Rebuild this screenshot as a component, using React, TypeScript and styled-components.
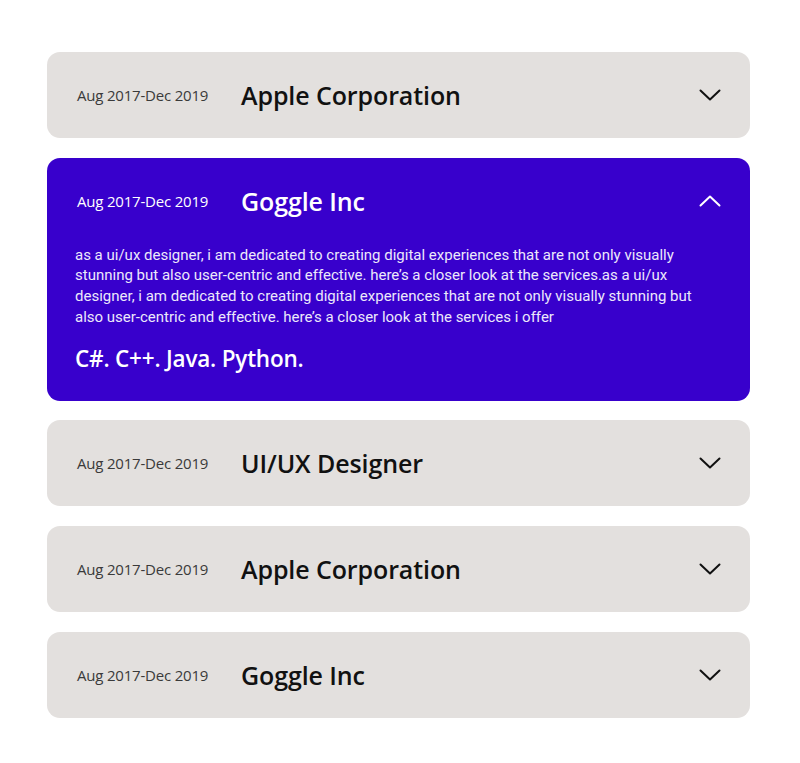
import React, { useState } from 'react';
import styled, { createGlobalStyle } from 'styled-components';

const GlobalStyle = createGlobalStyle`
  body {
    margin: 0;
    background: #ffffff;
    font-family: "Open Sans", "Noto Sans", sans-serif;
  }
`;

const colors = {
  card: '#e3e0de',
  active: '#3800cc',
  text: '#111111',
  date: '#3a3a3a',
};

interface Job {
  period: string;
  company: string;
  description?: string;
  skills?: string;
}

const description =
  'as a ui/ux designer, i am dedicated to creating digital experiences that are not only visually stunning but also user-centric and effective. here\u2019s a closer look at the services.as a ui/ux designer, i am dedicated to creating digital experiences that are not only visually stunning but also user-centric and effective. here\u2019s a closer look at the services i offer';

const jobs: Job[] = [
  { period: 'Aug 2017-Dec 2019', company: 'Apple Corporation' },
  { period: 'Aug 2017-Dec 2019', company: 'Goggle Inc', description, skills: 'C#. C++. Java. Python.' },
  { period: 'Aug 2017-Dec 2019', company: 'UI/UX Designer' },
  { period: 'Aug 2017-Dec 2019', company: 'Apple Corporation' },
  { period: 'Aug 2017-Dec 2019', company: 'Goggle Inc' },
];

const List = styled.div`
  width: 703px;
  margin: 52px 0 0 47px;
  display: flex;
  flex-direction: column;
  gap: 19.7px;
`;

const Card = styled.div<{ $open: boolean }>`
  border-radius: 13px;
  background: ${(p) => (p.$open ? colors.active : colors.card)};
  color: ${(p) => (p.$open ? '#ffffff' : colors.text)};
`;

const Header = styled.div`
  height: 86px;
  display: flex;
  align-items: center;
  padding: 0 29px 0 30px;
  cursor: pointer;
`;

const Period = styled.span<{ $open: boolean }>`
  width: 164px;
  flex-shrink: 0;
  font-size: 15px;
  color: ${(p) => (p.$open ? '#ffffff' : colors.date)};
  letter-spacing: -0.2px;
`;

const Company = styled.span`
  flex: 1;
  font-size: 25px;
  font-weight: 600;
  letter-spacing: -0.1px;
`;

const Body = styled.div`
  padding: 1px 40px 27px 28px;
`;

const Text = styled.p`
  margin: 0;
  font-family: Roboto, "Noto Sans", sans-serif;
  font-size: 15px;
  line-height: 20.7px;
  color: #ece8fb;
`;

const Skills = styled.div`
  margin-top: 16px;
  font-size: 22.5px;
  line-height: 30px;
  font-weight: 600;
  letter-spacing: -0.2px;
`;

const Chevron = ({ up }: { up: boolean }) => (
  <svg width="22" height="12" viewBox="0 0 22 12" fill="none">
    <polyline
      points={up ? '1.5,10.5 11,1.5 20.5,10.5' : '1.5,1.5 11,10.5 20.5,1.5'}
      stroke="currentColor"
      strokeWidth="2"
      strokeLinecap="round"
      strokeLinejoin="round"
    />
  </svg>
);

export default function App() {
  const [open, setOpen] = useState(1);
  return (
    <>
      <GlobalStyle />
      <List>
        {jobs.map((job, i) => {
          const isOpen = open === i;
          return (
            <Card key={i} $open={isOpen}>
              <Header onClick={() => setOpen(isOpen ? -1 : i)}>
                <Period $open={isOpen}>{job.period}</Period>
                <Company>{job.company}</Company>
                <Chevron up={isOpen} />
              </Header>
              {isOpen && job.description && (
                <Body>
                  <Text>{job.description}</Text>
                  <Skills>{job.skills}</Skills>
                </Body>
              )}
            </Card>
          );
        })}
      </List>
    </>
  );
}
